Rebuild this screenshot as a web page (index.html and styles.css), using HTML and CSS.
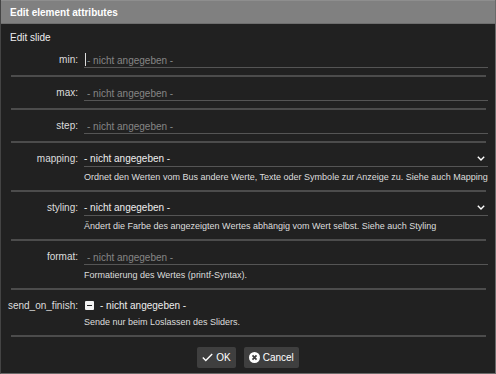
FILE: index.html
```html
<!DOCTYPE html>
<html lang="de">
<head>
    <meta charset="UTF-8">
    <meta name="viewport" content="width=device-width, initial-scale=1.0">
    <title>Edit element attributes</title>
    <link rel="stylesheet" href="styles.css">
</head>
<body>
    <div class="dialog">
        <div class="titlebar">Edit element attributes</div>

        <div class="content">
            <div class="section-title">Edit slide</div>

            <div class="form">
                <div class="row">
                    <label class="label">min:</label>
                    <div class="field">
                        <div class="control focused"><input type="text" placeholder="- nicht angegeben -"></div>
                    </div>
                </div>

                <div class="row">
                    <label class="label">max:</label>
                    <div class="field">
                        <div class="control"><input type="text" placeholder="- nicht angegeben -"></div>
                    </div>
                </div>

                <div class="row">
                    <label class="label">step:</label>
                    <div class="field">
                        <div class="control"><input type="text" placeholder="- nicht angegeben -"></div>
                    </div>
                </div>

                <div class="row">
                    <label class="label">mapping:</label>
                    <div class="field">
                        <div class="control select">
                            <span class="value">- nicht angegeben -</span>
                            <svg class="chevron" width="8" height="5" viewBox="0 0 8 5"><polyline points="0.8,0.8 4,4 7.2,0.8" fill="none" stroke="#fff" stroke-width="1.4"/></svg>
                        </div>
                        <div class="help">Ordnet den Werten vom Bus andere Werte, Texte oder Symbole zur Anzeige zu. Siehe auch Mapping</div>
                    </div>
                </div>

                <div class="row">
                    <label class="label">styling:</label>
                    <div class="field">
                        <div class="control select">
                            <span class="value">- nicht angegeben -</span>
                            <svg class="chevron" width="8" height="5" viewBox="0 0 8 5"><polyline points="0.8,0.8 4,4 7.2,0.8" fill="none" stroke="#fff" stroke-width="1.4"/></svg>
                        </div>
                        <div class="help">Ändert die Farbe des angezeigten Wertes abhängig vom Wert selbst. Siehe auch Styling</div>
                    </div>
                </div>

                <div class="row">
                    <label class="label">format:</label>
                    <div class="field">
                        <div class="control"><input type="text" placeholder="- nicht angegeben -"></div>
                        <div class="help">Formatierung des Wertes (printf-Syntax).</div>
                    </div>
                </div>

                <div class="row">
                    <label class="label">send_on_finish:</label>
                    <div class="field">
                        <div class="check-line">
                            <span class="checkbox"></span>
                            <span class="value">- nicht angegeben -</span>
                        </div>
                        <div class="help">Sende nur beim Loslassen des Sliders.</div>
                    </div>
                </div>
            </div>

            <div class="buttons">
                <button class="btn">
                    <svg width="11" height="9" viewBox="0 0 11 9"><polyline points="0.8,4.6 3.8,7.6 10.2,1" fill="none" stroke="#fff" stroke-width="1.4"/></svg>
                    OK
                </button>
                <button class="btn">
                    <svg width="11" height="11" viewBox="0 0 12 12"><circle cx="6" cy="6" r="6" fill="#fff"/><path d="M3.8 3.8 L8.2 8.2 M8.2 3.8 L3.8 8.2" stroke="#3d3d3d" stroke-width="1.9"/></svg>
                    Cancel
                </button>
            </div>
        </div>
    </div>
</body>
</html>
```

FILE: styles.css
```css
* {
    box-sizing: border-box;
}

body {
    margin: 0;
    font-family: "Liberation Sans", Arial, sans-serif;
    font-size: 10px;
    background-color: #212121;
    color: #ddd;
}

.dialog {
    width: 496px;
    height: 374px;
    background-color: #212121;
    border: 1px solid #6a6a6a;
    border-left-color: #444;
    border-top: none;
}

.titlebar {
    height: 24px;
    line-height: 23px;
    padding-left: 9px;
    background-color: #808080;
    border-top: 1px solid #8e8e8e;
    border-bottom: 1px solid #6e6e6e;
    color: #fff;
    font-weight: bold;
}

.content {
    padding: 7px 9px 0 9px;
}

.section-title {
    height: 13px;
    line-height: 13px;
    color: #eee;
}

.form {
    padding: 0 0 0 1px;
}

.row {
    display: flex;
    gap: 6px;
    padding: 6px 0 7px 0;
    border-bottom: 2px solid #4c4c4c;
}

.label {
    flex: none;
    width: 67px;
    display: flex;
    justify-content: flex-end;
    white-space: nowrap;
    padding-top: 3px;
    line-height: 14px;
    color: #ddd;
}

.field {
    flex: 1;
    min-width: 0;
    margin-right: -2px;
}

.control {
    position: relative;
    height: 18px;
    border-bottom: 1px solid #555;
}

.control input {
    width: 100%;
    height: 17px;
    padding: 3px 0 0 3px;
    border: none;
    outline: none;
    background: transparent;
    font-family: inherit;
    font-size: 10px;
    line-height: 14px;
    color: #eee;
}

.control input::placeholder {
    color: #858585;
}

.focused::before {
    content: "";
    position: absolute;
    left: 1px;
    top: 3px;
    width: 1px;
    height: 13px;
    background-color: #ddd;
}

.select {
    display: flex;
    align-items: center;
    justify-content: space-between;
    padding: 3px 3px 0 0;
}

.select .value {
    line-height: 14px;
    color: #eee;
}

.chevron {
    margin-top: -1px;
}

.help {
    margin-top: 4px;
    line-height: 12px;
    font-size: 9px;
    color: #ddd;
    white-space: nowrap;
}

.check-line {
    display: flex;
    align-items: center;
    gap: 6px;
    height: 18px;
    padding: 1px 0 0 1px;
}

.checkbox {
    position: relative;
    width: 9px;
    height: 9px;
    background-color: #f2f2f2;
    border-radius: 1px;
}

.checkbox::after {
    content: "";
    position: absolute;
    left: 2px;
    top: 4px;
    width: 5px;
    height: 1px;
    background-color: #222;
}

.check-line .value {
    line-height: 14px;
    color: #eee;
}

.check-line + .help {
    margin-top: 2px;
}

.buttons {
    display: flex;
    justify-content: center;
    gap: 8px;
    padding-top: 10px;
}

.btn {
    display: flex;
    align-items: center;
    gap: 3px;
    height: 21px;
    padding: 0 5px;
    background-color: #3f3f3f;
    border: none;
    border-radius: 2px;
    color: #fff;
    font-family: inherit;
    font-size: 10px;
    cursor: pointer;
}

.btn:hover {
    background-color: #4a4a4a;
}
```
